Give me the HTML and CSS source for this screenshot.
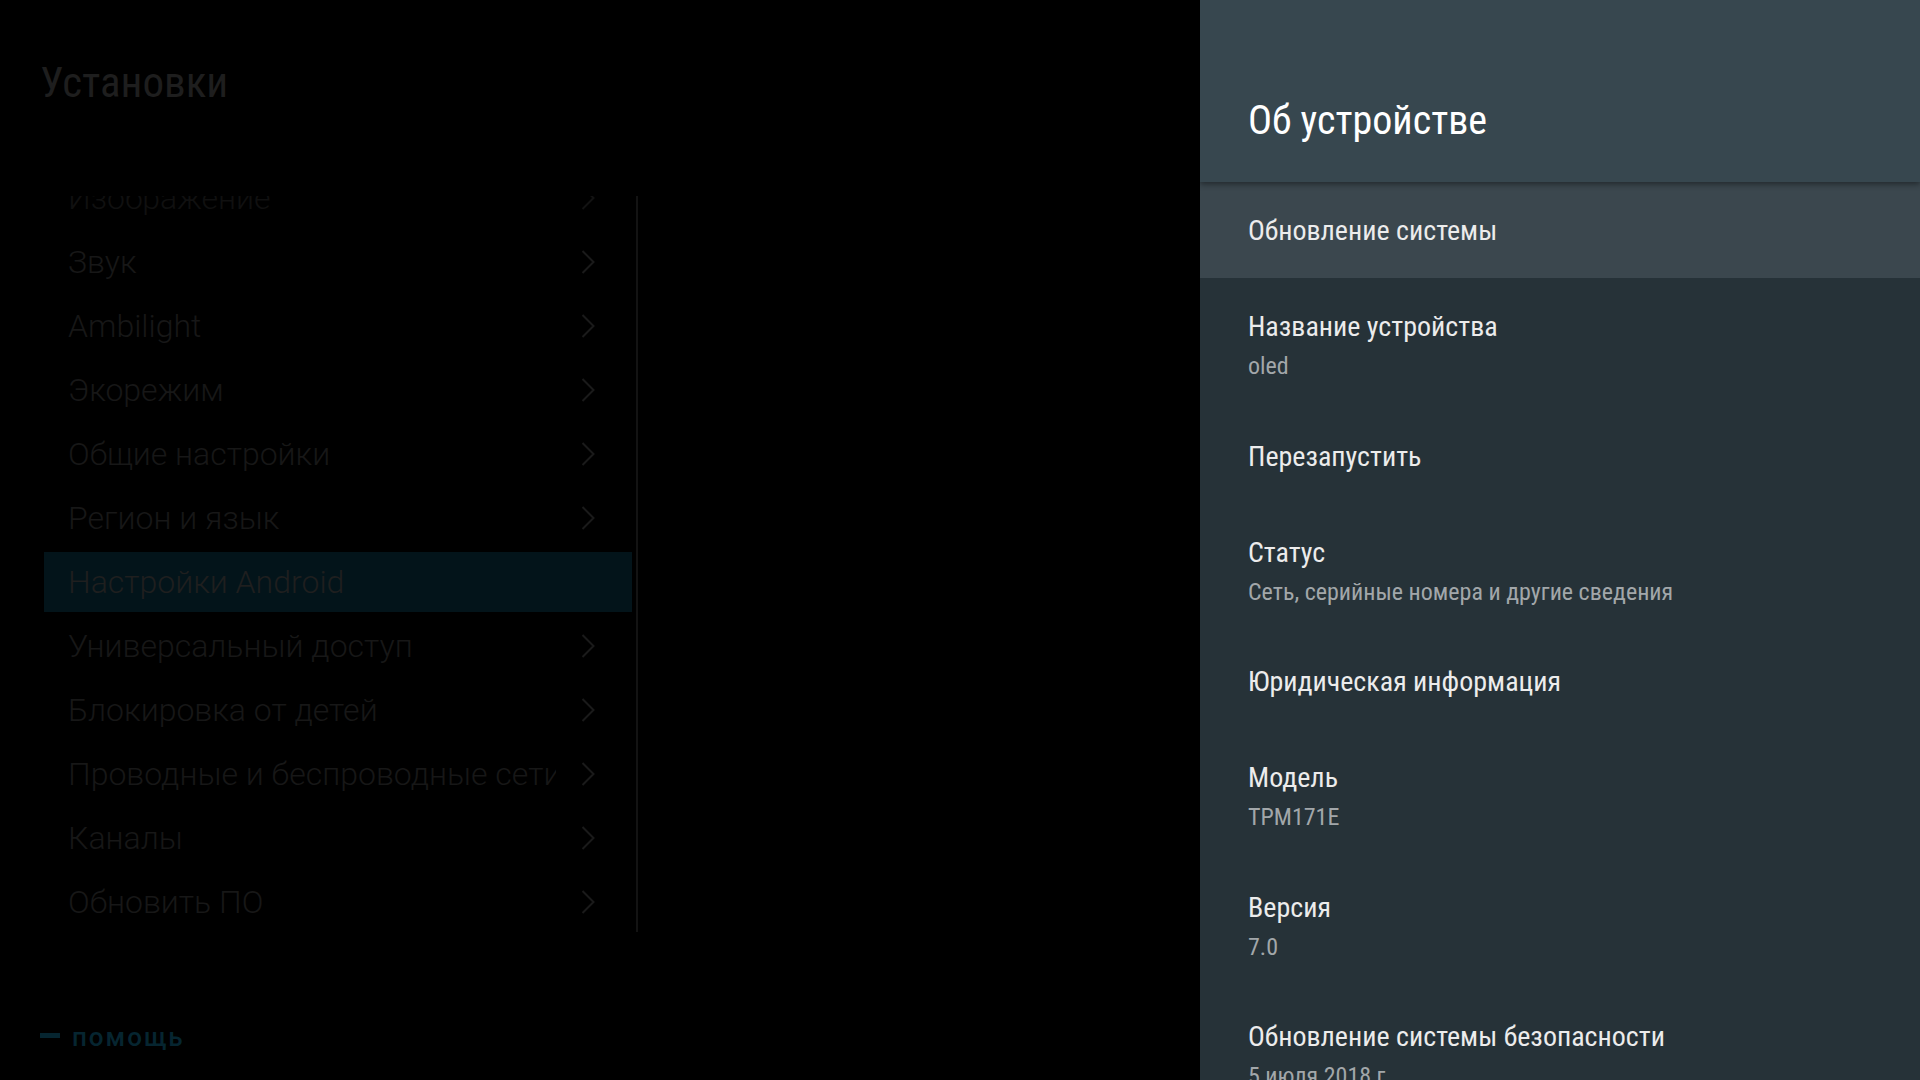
FILE: index.html
```html
<!DOCTYPE html>
<html lang="ru">
  <head>
    <meta charset="UTF-8" />
    <meta name="viewport" content="width=device-width, initial-scale=1.0" />
    <title>Установки — Об устройстве</title>
    <link rel="stylesheet" href="styles.css">
  </head>
  <body>
    <!-- Main settings menu (dimmed behind the side panel) -->
    <div class="main">
      <h1 class="main-title">Установки</h1>

      <div class="menu">
        <ul class="menu-list">
          <li class="menu-item faded">
            <span class="menu-label">Изображение</span>
            <svg class="chevron" viewBox="0 0 14 24"><path d="M1.5 1 L12.5 12 L1.5 23" /></svg>
          </li>
          <li class="menu-item">
            <span class="menu-label">Звук</span>
            <svg class="chevron" viewBox="0 0 14 24"><path d="M1.5 1 L12.5 12 L1.5 23" /></svg>
          </li>
          <li class="menu-item">
            <span class="menu-label">Ambilight</span>
            <svg class="chevron" viewBox="0 0 14 24"><path d="M1.5 1 L12.5 12 L1.5 23" /></svg>
          </li>
          <li class="menu-item">
            <span class="menu-label">Экорежим</span>
            <svg class="chevron" viewBox="0 0 14 24"><path d="M1.5 1 L12.5 12 L1.5 23" /></svg>
          </li>
          <li class="menu-item">
            <span class="menu-label">Общие настройки</span>
            <svg class="chevron" viewBox="0 0 14 24"><path d="M1.5 1 L12.5 12 L1.5 23" /></svg>
          </li>
          <li class="menu-item">
            <span class="menu-label">Регион и язык</span>
            <svg class="chevron" viewBox="0 0 14 24"><path d="M1.5 1 L12.5 12 L1.5 23" /></svg>
          </li>
          <li class="menu-item active">
            <span class="menu-label">Настройки Android</span>
          </li>
          <li class="menu-item">
            <span class="menu-label">Универсальный доступ</span>
            <svg class="chevron" viewBox="0 0 14 24"><path d="M1.5 1 L12.5 12 L1.5 23" /></svg>
          </li>
          <li class="menu-item">
            <span class="menu-label">Блокировка от детей</span>
            <svg class="chevron" viewBox="0 0 14 24"><path d="M1.5 1 L12.5 12 L1.5 23" /></svg>
          </li>
          <li class="menu-item">
            <span class="menu-label">Проводные и беспроводные сети</span>
            <svg class="chevron" viewBox="0 0 14 24"><path d="M1.5 1 L12.5 12 L1.5 23" /></svg>
          </li>
          <li class="menu-item">
            <span class="menu-label">Каналы</span>
            <svg class="chevron" viewBox="0 0 14 24"><path d="M1.5 1 L12.5 12 L1.5 23" /></svg>
          </li>
          <li class="menu-item">
            <span class="menu-label">Обновить ПО</span>
            <svg class="chevron" viewBox="0 0 14 24"><path d="M1.5 1 L12.5 12 L1.5 23" /></svg>
          </li>
        </ul>
      </div>

      <div class="help">
        <span class="help-key"></span>
        <span class="help-text">помощь</span>
      </div>
    </div>

    <!-- About device panel -->
    <div class="side">
      <div class="side-header">
        <h2>Об устройстве</h2>
      </div>

      <div class="side-list">
        <div class="row selected">
          <div class="row-title">Обновление системы</div>
        </div>
        <div class="row has-sub">
          <div class="row-title">Название устройства</div>
          <div class="row-sub">oled</div>
        </div>
        <div class="row">
          <div class="row-title">Перезапустить</div>
        </div>
        <div class="row has-sub">
          <div class="row-title">Статус</div>
          <div class="row-sub">Сеть, серийные номера и другие сведения</div>
        </div>
        <div class="row">
          <div class="row-title">Юридическая информация</div>
        </div>
        <div class="row has-sub">
          <div class="row-title">Модель</div>
          <div class="row-sub">TPM171E</div>
        </div>
        <div class="row has-sub">
          <div class="row-title">Версия</div>
          <div class="row-sub">7.0</div>
        </div>
        <div class="row has-sub">
          <div class="row-title">Обновление системы безопасности</div>
          <div class="row-sub">5 июля 2018 г.</div>
        </div>
      </div>
    </div>
  </body>
</html>
```

FILE: styles.css
```css
html,
body {
  margin: 0;
  padding: 0;
}

body {
  width: 1920px;
  height: 1080px;
  overflow: hidden;
  display: flex;
  background-color: #000;
  font-family: Roboto, "Noto Sans", sans-serif;
}

/* ---------- left: dimmed settings menu ---------- */

.main {
  width: 1200px;
  flex: none;
  display: flex;
  flex-direction: column;
}

.main-title {
  margin: 0;
  padding: 56px 0 0 40px;
  font-family: "Roboto Condensed", Roboto, sans-serif;
  font-stretch: 75%;
  font-size: 43px;
  line-height: 52px;
  font-weight: 400;
  color: #1e1e1e;
}

.menu {
  margin: 88px 0 0 44px;
  width: 588px;
  height: 736px;
  padding-right: 4px;
  border-right: 2px solid #131313;
  overflow: hidden;
}

.menu-list {
  list-style: none;
  margin: -28px 0 0;
  padding: 0;
}

.menu-item {
  display: flex;
  align-items: center;
  height: 60px;
  margin-bottom: 4px;
  padding: 0 37px 0 24px;
  font-size: 32px;
  font-weight: 300;
  line-height: 60px;
  color: #171717;
}

.menu-item.faded {
  color: #101010;
}

.menu-item.active {
  background: #03141a;
  color: #1f1f1f;
}

.menu-label {
  flex: 1;
  overflow: hidden;
  white-space: nowrap;
}

.chevron {
  flex: none;
  width: 14px;
  height: 24px;
  margin-left: 25px;
  fill: none;
  stroke: #1a1a1a;
  stroke-width: 2;
}

.menu-item.faded .chevron {
  stroke: #121212;
}

.help {
  display: flex;
  align-items: center;
  margin: 90px 0 0 40px;
  line-height: 30px;
}

.help-key {
  width: 20px;
  height: 5px;
  margin-top: -3px;
  background: #062530;
}

.help-text {
  margin-left: 12px;
  font-size: 26px;
  font-weight: 500;
  letter-spacing: 2px;
  color: #062530;
}

/* ---------- right: about device panel ---------- */

.side {
  width: 720px;
  flex: none;
  background: #263238;
  font-family: "Roboto Condensed", Roboto, sans-serif;
  font-stretch: 75%;
}

.side-header {
  position: relative;
  z-index: 2;
  height: 182px;
  box-sizing: border-box;
  padding: 97px 48px 0;
  background: #37474f;
  box-shadow: 0 2px 6px rgba(0, 0, 0, 0.45);
}

.side-header h2 {
  margin: 0;
  font-size: 40px;
  line-height: 48px;
  font-weight: 400;
  color: #fff;
}

.row {
  height: 96px;
  box-sizing: border-box;
  padding: 32px 48px 0;
}

.row.has-sub {
  height: 129.5px;
}

.row.selected {
  background: #3b474e;
}

.row-title {
  font-size: 28px;
  line-height: 34px;
  color: #ececec;
}

.row-sub {
  margin-top: 8px;
  font-size: 24px;
  line-height: 28px;
  color: #a2a7aa;
}
```
